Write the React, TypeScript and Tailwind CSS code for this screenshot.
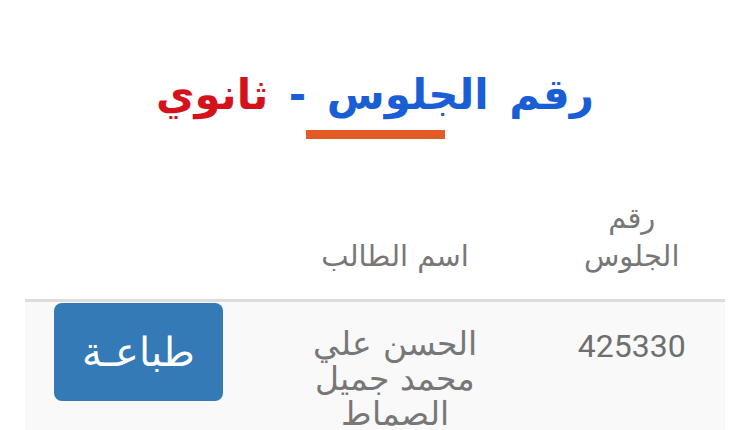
import React from "react";

export default function App() {
  return (
    <div dir="rtl" className="w-[750px] h-[430px] overflow-hidden bg-white">
      <div className="h-[72px]" />
      <h1 className="text-center text-[42px] leading-[46px] font-bold [font-family:'DejaVu_Sans',sans-serif] [word-spacing:6px]">
        <span className="text-[#1a5ed6]">رقم الجلوس -</span>{" "}
        <span className="text-[#d4121c]">ثانوي</span>
      </h1>
      <div className="flex justify-center mt-[12px]">
        <div className="w-[139px] h-[9px] bg-[#e35a25]" />
      </div>
      <div className="px-[25px] mt-[60px]">
        <table className="w-full border-collapse [font-family:'DejaVu_Sans',sans-serif] text-[#777]">
          <thead>
            <tr className="border-b-[3px] border-[#ddd]">
              <th className="w-[186px] align-bottom text-center font-normal text-[29px] leading-[38px] pb-[24px]">
                رقم<br />الجلوس
              </th>
              <th className="w-[286px] align-bottom text-center font-normal text-[29px] leading-[38px] pb-[24px]">
                اسم الطالب
              </th>
              <th className="w-[226px]" />
            </tr>
          </thead>
          <tbody>
            <tr className="bg-[#f9f9f9]">
              <td className="align-top text-center pt-[24px] text-[32px] leading-[40px] text-[#6f6f6f] [font-family:Roboto,sans-serif]">
                425330
              </td>
              <td className="align-top text-center pt-[24px] text-[33px] leading-[35px] font-light">
                الحسن علي<br />محمد جميل<br />الصماط
              </td>
              <td className="align-top text-center pt-[1px]">
                <button className="w-[169px] h-[98px] rounded-[8px] bg-[#337ab7] text-white text-[40px] [font-family:'DejaVu_Sans',sans-serif] font-light">
                  طباعـة
                </button>
              </td>
            </tr>
          </tbody>
        </table>
      </div>
    </div>
  );
}
